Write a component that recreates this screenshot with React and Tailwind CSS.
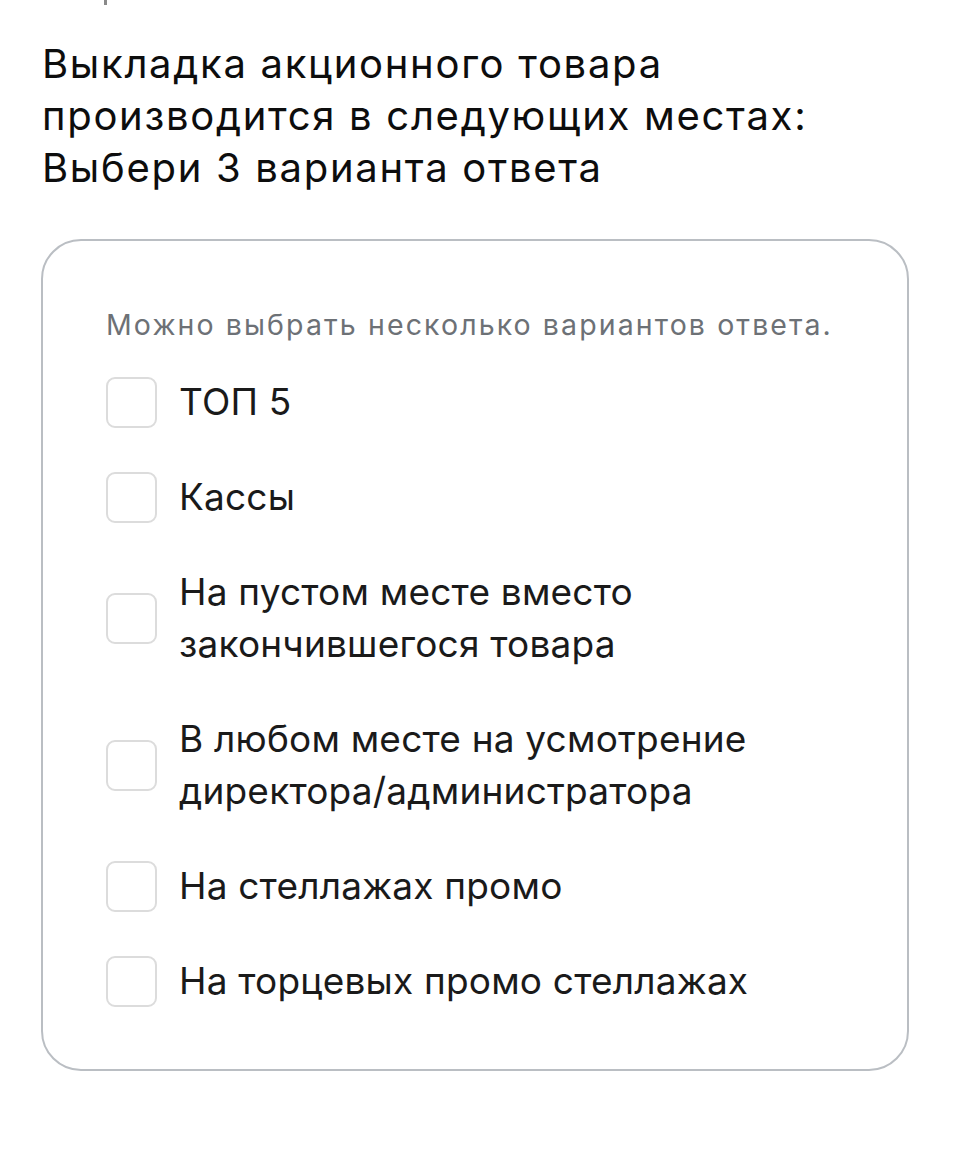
const options = [
  'ТОП 5',
  'Кассы',
  'На пустом месте вместо закончившегося товара',
  'В любом месте на усмотрение директора/администратора',
  'На стеллажах промо',
  'На торцевых промо стеллажах',
];

function Option({ label }) {
  return (
    <label className="flex items-center gap-[22px]">
      <span className="h-[51px] w-[51px] shrink-0 rounded-[9px] border-2 border-[#dcdcdc] bg-white" />
      <span className="text-[37px] leading-[52px] tracking-[0.2px] text-[#1a1a1a]">{label}</span>
    </label>
  );
}

export default function App() {
  return (
    <div className="min-h-[1149px] bg-white font-['Inter',sans-serif]">
      <div className="h-[5px] pl-[104px]">
        <span className="block h-[5px] w-[3px] bg-[#8a8a8a]" />
      </div>
      <h1 className="mt-[33px] max-w-[900px] px-[42px] text-[40px] font-normal leading-[52px] tracking-[1.7px] text-[#0d0d0d]">
        Выкладка акционного товара производится в следующих местах: Выбери 3 варианта ответа
      </h1>
      <div className="ml-[41px] mr-[63px] mt-[45px] rounded-[40px] border-2 border-[#babec3] px-[63px] pb-[62px] pt-[66px]">
        <p className="text-[28.5px] leading-[36px] tracking-[2.1px] text-[#6d7176]">
          Можно выбрать несколько вариантов ответа.
        </p>
        <div className="mt-[33px] flex flex-col gap-[43px]">
          {options.map((o) => (
            <Option key={o} label={o} />
          ))}
        </div>
      </div>
    </div>
  );
}
